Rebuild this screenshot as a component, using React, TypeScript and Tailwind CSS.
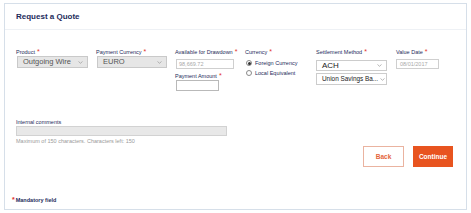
import React from "react";

const font = { fontFamily: '"Liberation Sans", Arial, sans-serif' };

function Label({ text, required = true }: { text: string; required?: boolean }) {
  return (
    <div className="flex h-[7px] items-start text-[5.5px] leading-[7px] text-[#1d2b5b]">
      <span>{text}</span>
      {required && <span className="ml-[2px] -mt-[1px] text-[7px] leading-[7px] text-[#e2332b]">*</span>}
    </div>
  );
}

function Caret() {
  return (
    <svg width="5" height="3" viewBox="0 0 5 3" className="shrink-0">
      <path d="M0.5 0.5 L2.5 2.3 L4.5 0.5" fill="none" stroke="#9a9a9a" strokeWidth="0.7" />
    </svg>
  );
}

function Select({
  value,
  disabled,
  className,
}: {
  value: string;
  disabled?: boolean;
  className: string;
}) {
  return (
    <div
      className={
        "flex items-center justify-between gap-[2px] overflow-hidden border pl-[5px] pr-[4px] " +
        (disabled
          ? "border-[#c9c9c9] bg-[#e6e6e6] text-[#555555] "
          : "border-[#cccccc] bg-white text-[#222222] ") +
        className
      }
    >
      <span className="whitespace-nowrap">{value}</span>
      <Caret />
    </div>
  );
}

function Radio({ label, checked }: { label: string; checked?: boolean }) {
  return (
    <div className="flex h-[10px] items-center gap-[3px] text-[5.5px] text-[#1d2b5b]">
      <span className="flex h-[6px] w-[6px] items-center justify-center rounded-full border-[0.7px] border-[#8a8a8a] bg-white">
        {checked && <span className="h-[3px] w-[3px] rounded-full bg-[#333333]" />}
      </span>
      <span>{label}</span>
    </div>
  );
}

export default function App() {
  return (
    <div className="h-[213px] w-[471px] bg-white pl-[4px] pt-[3px]" style={font}>
      <div className="flex h-[207px] w-[463px] flex-col border border-[#d6dfe9]">
        <div className="flex h-[26px] shrink-0 items-center border-b border-[#eef1f5] px-[11px]">
          <h1 className="text-[8px] font-bold text-[#1d2b5b]">Request a Quote</h1>
        </div>

        <div className="flex flex-1 flex-col px-[11px] pt-[19px]">
          <div className="flex">
            <div className="w-[80px]">
              <Label text="Product" />
              <Select value="Outgoing Wire" disabled className="ml-[1px] h-[12px] w-[71px] text-[7.5px]" />
            </div>
            <div className="w-[79px]">
              <Label text="Payment Currency" />
              <Select value="EURO" disabled className="ml-[1px] h-[12px] w-[70px] text-[7.5px]" />
            </div>
            <div className="w-[70px]">
              <Label text="Available for Drawdown" />
              <div className="ml-[1px] mt-[3px] flex h-[10px] w-[58px] items-center border border-[#cfcfcf] px-[2px] text-[5.5px] text-[#a9a9a9]">
                98,669.72
              </div>
              <div className="mt-[4px]">
                <Label text="Payment Amount" />
              </div>
              <div className="ml-[1px] h-[11px] w-[43px] border border-[#b9b9b9] bg-white" />
            </div>
            <div className="w-[71px]">
              <Label text="Currency" />
              <div className="ml-[1px] mt-[2px]">
                <Radio label="Foreign Currency" checked />
                <Radio label="Local Equivalent" />
              </div>
            </div>
            <div className="w-[80px]">
              <Label text="Settlement Method" />
              <Select value="ACH" className="mt-[4px] h-[11px] w-[71px] text-[8px]" />
              <Select value="Union Savings Ba..." className="mt-[2px] h-[12px] w-[71px] pl-[4px] text-[6.4px]" />
            </div>
            <div>
              <Label text="Value Date" />
              <div className="mt-[3px] flex h-[10px] w-[43px] items-center border border-[#cfcfcf] px-[3px] text-[5.5px] text-[#a9a9a9]">
                08/01/2017
              </div>
            </div>
          </div>

          <div className="mt-[28px]">
            <Label text="Internal comments" required={false} />
            <div className="h-[10px] w-[211px] border border-[#d2d2d2] bg-[#e8e8e8]" />
            <div className="mt-[2px] text-[5.5px] leading-[7px] text-[#9a9a9a]">
              Maximum of 150 characters. Characters left: 150
            </div>
          </div>

          <div className="mt-[1px] flex justify-end gap-[9px] pr-[2px]">
            <button className="h-[21px] w-[41px] border border-[#eab3a0] bg-white text-[6.5px] font-bold text-[#e4643b]">
              Back
            </button>
            <button className="h-[21px] w-[40px] bg-[#e8541f] text-[6.5px] font-bold text-white">
              Continue
            </button>
          </div>

          <div className="mt-auto mb-[5px] -ml-[4px] flex items-start text-[5.5px] font-bold text-[#1d2b5b]">
            <span className="-mt-[1px] mr-[1px] text-[7px] leading-[7px] text-[#e2332b]">*</span>
            <span className="leading-[7px]">Mandatory field</span>
          </div>
        </div>
      </div>
    </div>
  );
}
